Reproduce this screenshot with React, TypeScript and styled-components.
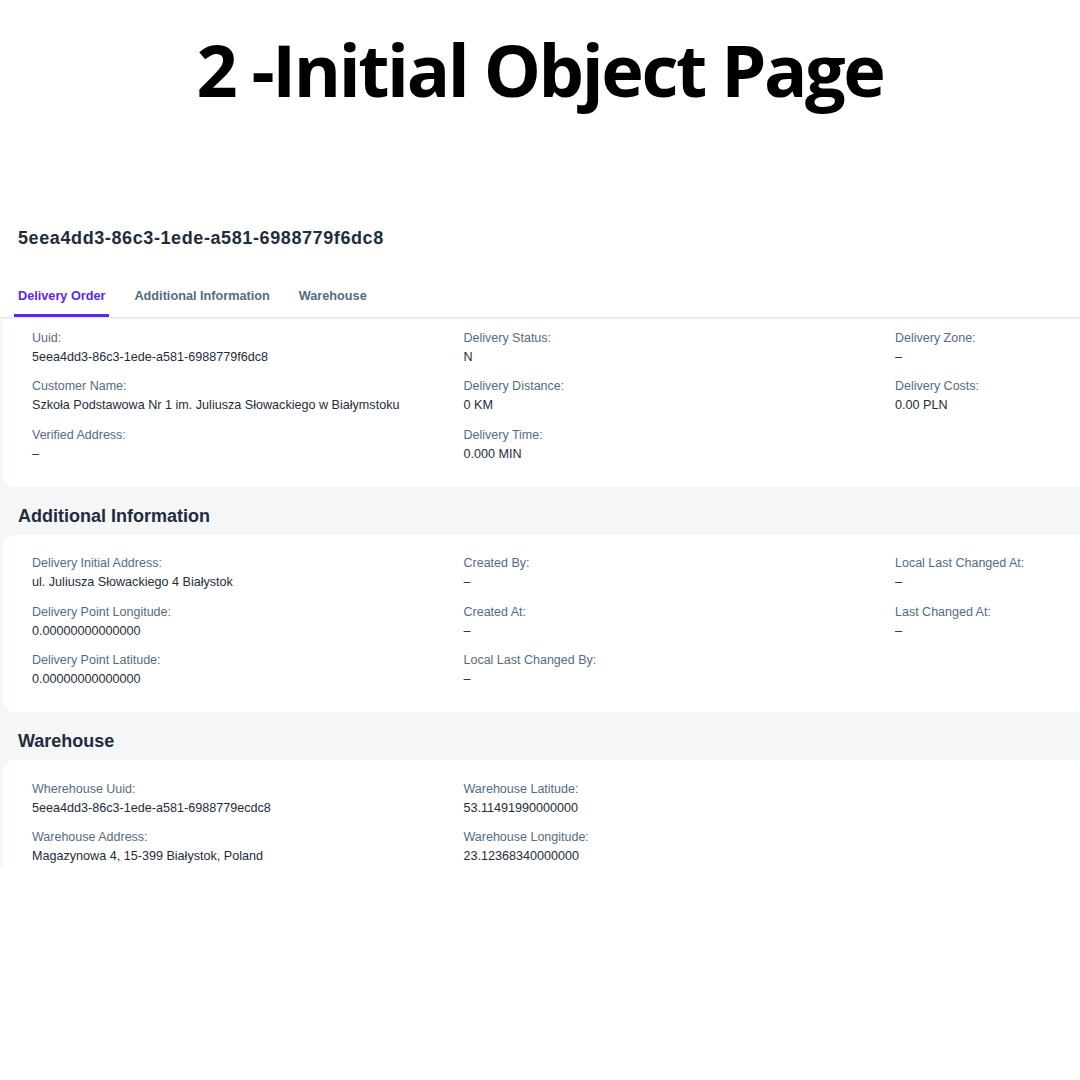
import styled, { createGlobalStyle } from "styled-components"

const GlobalStyle = createGlobalStyle`
    html, body {
        margin: 0;
        padding: 0;
        background: #ffffff;
    }
    * {
        box-sizing: border-box;
    }
`

const Page = styled.div`
    width: 1080px;
    height: 1080px;
    overflow: hidden;
    background: #ffffff;
    font-family: "Liberation Sans", Arial, sans-serif;
`

const Title = styled.h1`
    margin: 0;
    height: 200px;
    padding-top: 33px;
    text-align: center;
    font-family: "Open Sans", sans-serif;
    font-weight: 700;
    font-size: 72px;
    letter-spacing: -2.4px;
    line-height: 1;
    color: #000000;
`

const Shot = styled.div`
    height: 668px;
    overflow: hidden;
    display: flex;
    flex-direction: column;
    & > * {
        flex-shrink: 0;
    }
`

const ObjectHeader = styled.div`
    padding: 26px 18px 0;
    height: 76px;
    font-size: 18px;
    line-height: 24px;
    font-weight: 700;
    letter-spacing: 0.6px;
    color: #1d2d3e;
`

const TabBar = styled.div`
    display: flex;
    padding: 0 14px;
    height: 42px;
    border-bottom: 1px solid #e2e4e7;
    box-shadow: 0 1px 2px rgba(0, 0, 0, 0.06);
    position: relative;
    z-index: 1;
`

const Tab = styled.div<{ $active?: boolean }>`
    display: flex;
    align-items: center;
    padding: 2px 4px 0;
    margin-right: 21px;
    height: 41px;
    font-size: 12.7px;
    font-weight: 700;
    color: ${({ $active }) => ($active ? "#5b27f2" : "#556b82")};
    border-bottom: 3px solid ${({ $active }) => ($active ? "#5b27f2" : "transparent")};
    border-radius: 2px 2px 0 0;
`

const Content = styled.div`
    flex: 1;
    background: #f5f6f7;
    padding-left: 3px;
`

const Section = styled.div`
    margin-right: -20px;
`

const SectionTitle = styled.div`
    padding: 19px 0 9px 15px;
    font-size: 18px;
    line-height: 20px;
    font-weight: 700;
    color: #1d2d3e;
`

const Card = styled.div<{ $flush?: boolean }>`
    background: #ffffff;
    border-radius: ${({ $flush }) => ($flush ? "0 0 12px 12px" : "12px")};
    padding: ${({ $flush }) => ($flush ? "10.5px 0 23px" : "19.5px 0 23px")} 29px;
    display: grid;
    grid-template-columns: 431.5px 431.5px 1fr;
`

const Column = styled.div`
    display: flex;
    flex-direction: column;
    gap: 10.5px;
`

const Field = styled.div`
    display: flex;
    flex-direction: column;
`

const Label = styled.div`
    font-size: 12.5px;
    line-height: 19px;
    color: #556b82;
`

const Value = styled.div`
    font-size: 12.6px;
    line-height: 19px;
    color: #1d2d3e;
`

type FieldData = [string, string]

const Fields = ({ columns }: { columns: FieldData[][] }) => (
    <>
        {columns.map((col, i) => (
            <Column key={i}>
                {col.map(([label, value]) => (
                    <Field key={label}>
                        <Label>{label}</Label>
                        <Value>{value}</Value>
                    </Field>
                ))}
            </Column>
        ))}
    </>
)

const deliveryOrder: FieldData[][] = [
    [
        ["Uuid:", "5eea4dd3-86c3-1ede-a581-6988779f6dc8"],
        ["Customer Name:", "Szkoła Podstawowa Nr 1 im. Juliusza Słowackiego w Białymstoku"],
        ["Verified Address:", "–"],
    ],
    [
        ["Delivery Status:", "N"],
        ["Delivery Distance:", "0 KM"],
        ["Delivery Time:", "0.000 MIN"],
    ],
    [
        ["Delivery Zone:", "–"],
        ["Delivery Costs:", "0.00 PLN"],
    ],
]

const additionalInfo: FieldData[][] = [
    [
        ["Delivery Initial Address:", "ul. Juliusza Słowackiego 4 Białystok"],
        ["Delivery Point Longitude:", "0.00000000000000"],
        ["Delivery Point Latitude:", "0.00000000000000"],
    ],
    [
        ["Created By:", "–"],
        ["Created At:", "–"],
        ["Local Last Changed By:", "–"],
    ],
    [
        ["Local Last Changed At:", "–"],
        ["Last Changed At:", "–"],
    ],
]

const warehouse: FieldData[][] = [
    [
        ["Wherehouse Uuid:", "5eea4dd3-86c3-1ede-a581-6988779ecdc8"],
        ["Warehouse Address:", "Magazynowa 4, 15-399 Białystok, Poland"],
    ],
    [
        ["Warehouse Latitude:", "53.11491990000000"],
        ["Warehouse Longitude:", "23.12368340000000"],
    ],
]

export default function App() {
    return <Page>
        <GlobalStyle />
        <Title>2 -Initial Object Page</Title>
        <Shot>
            <ObjectHeader>5eea4dd3-86c3-1ede-a581-6988779f6dc8</ObjectHeader>
            <TabBar>
                <Tab $active>Delivery Order</Tab>
                <Tab>Additional Information</Tab>
                <Tab>Warehouse</Tab>
            </TabBar>
            <Content>
                <Section>
                    <Card $flush>
                        <Fields columns={deliveryOrder} />
                    </Card>
                </Section>
                <Section>
                    <SectionTitle>Additional Information</SectionTitle>
                    <Card>
                        <Fields columns={additionalInfo} />
                    </Card>
                </Section>
                <Section>
                    <SectionTitle>Warehouse</SectionTitle>
                    <Card>
                        <Fields columns={warehouse} />
                    </Card>
                </Section>
            </Content>
        </Shot>
    </Page>
}
